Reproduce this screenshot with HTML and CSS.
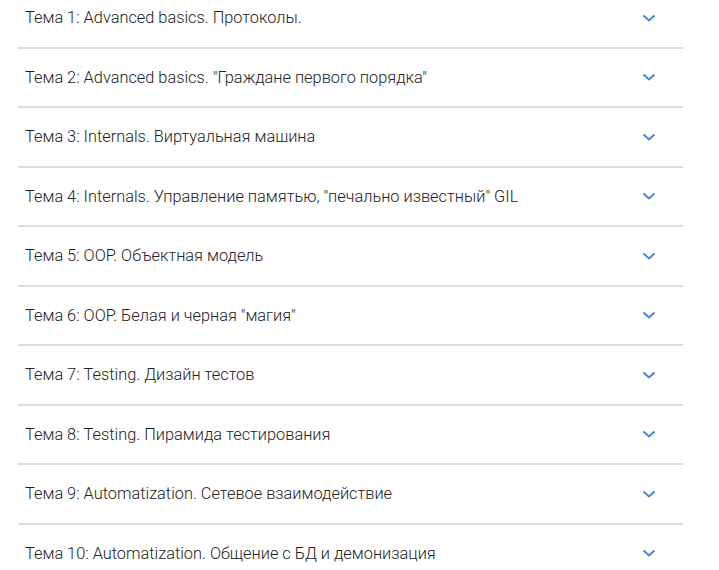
FILE: index.html
```html
<!DOCTYPE html>
<html lang="ru">
<head>
<meta charset="utf-8">
<link rel="stylesheet" href="styles.css">
</head>
<body>
<div class="list">
  <div class="row"><span class="title">Тема 1: Advanced basics. Протоколы.</span><svg class="chev" viewBox="0 0 14 8"><path d="M1.5 1.5 L7 6.5 L12.5 1.5"/></svg></div>
  <div class="row"><span class="title">Тема 2: Advanced basics. "Граждане первого порядка"</span><svg class="chev" viewBox="0 0 14 8"><path d="M1.5 1.5 L7 6.5 L12.5 1.5"/></svg></div>
  <div class="row"><span class="title">Тема 3: Internals. Виртуальная машина</span><svg class="chev" viewBox="0 0 14 8"><path d="M1.5 1.5 L7 6.5 L12.5 1.5"/></svg></div>
  <div class="row"><span class="title">Тема 4: Internals. Управление памятью, "печально известный" GIL</span><svg class="chev" viewBox="0 0 14 8"><path d="M1.5 1.5 L7 6.5 L12.5 1.5"/></svg></div>
  <div class="row"><span class="title">Тема 5: OOP. Объектная модель</span><svg class="chev" viewBox="0 0 14 8"><path d="M1.5 1.5 L7 6.5 L12.5 1.5"/></svg></div>
  <div class="row"><span class="title">Тема 6: OOP. Белая и черная "магия"</span><svg class="chev" viewBox="0 0 14 8"><path d="M1.5 1.5 L7 6.5 L12.5 1.5"/></svg></div>
  <div class="row"><span class="title">Тема 7: Testing. Дизайн тестов</span><svg class="chev" viewBox="0 0 14 8"><path d="M1.5 1.5 L7 6.5 L12.5 1.5"/></svg></div>
  <div class="row"><span class="title">Тема 8: Testing. Пирамида тестирования</span><svg class="chev" viewBox="0 0 14 8"><path d="M1.5 1.5 L7 6.5 L12.5 1.5"/></svg></div>
  <div class="row"><span class="title">Тема 9: Automatization. Сетевое взаимодействие</span><svg class="chev" viewBox="0 0 14 8"><path d="M1.5 1.5 L7 6.5 L12.5 1.5"/></svg></div>
  <div class="row"><span class="title">Тема 10: Automatization. Общение с БД и демонизация</span><svg class="chev" viewBox="0 0 14 8"><path d="M1.5 1.5 L7 6.5 L12.5 1.5"/></svg></div>
</div>
</body>
</html>
```
FILE: styles.css
```css
html, body {
  margin: 0;
  padding: 0;
  background: #fff;
  overflow: hidden;
}
body {
  font-family: Roboto, "Noto Sans", sans-serif;
  color: #222;
}
.list {
  margin: -11px 36px 0 18px;
}
.row {
  display: flex;
  align-items: center;
  justify-content: space-between;
  height: 57.5px;
  border-bottom: 2px solid #dcdcdc;
  padding: 0 27px 0 7px;
}
.title {
  font-size: 16.35px;
  font-weight: 300;
}
.chev {
  width: 14px;
  height: 8px;
  fill: none;
  stroke: #4a84d6;
  stroke-width: 2;
}
```
